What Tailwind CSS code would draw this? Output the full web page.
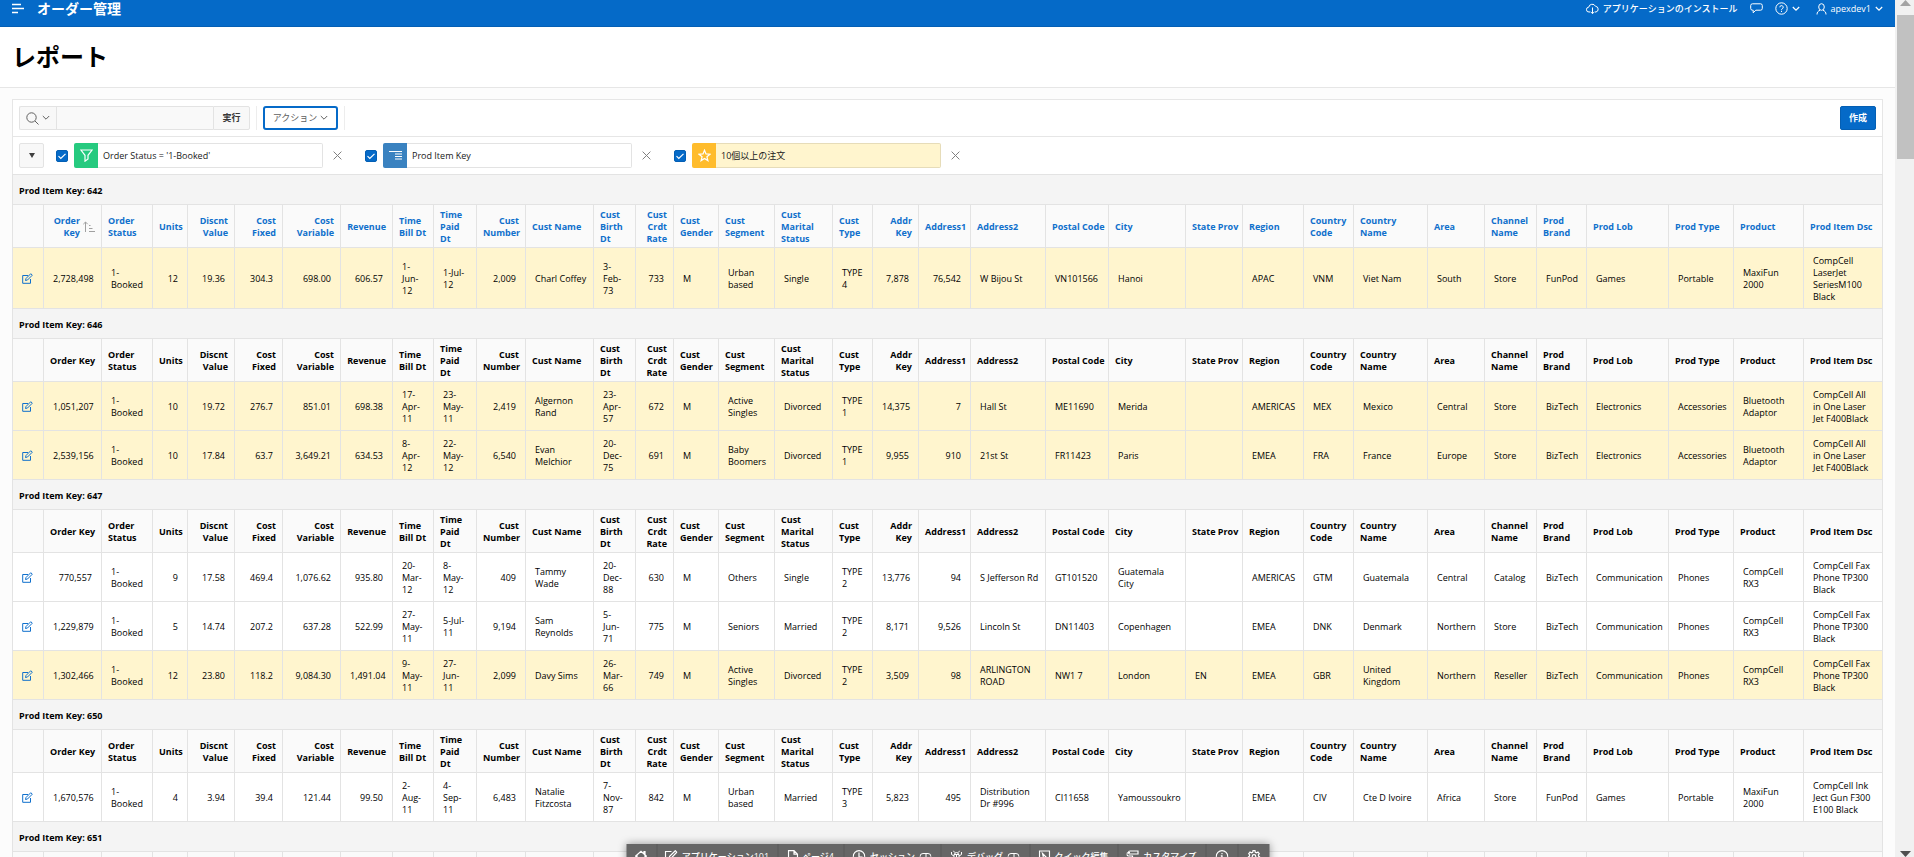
<!DOCTYPE html>
<html lang="ja">
<head>
    <meta charset="UTF-8">
    <meta name="viewport" content="width=device-width, initial-scale=1">
    <title>レポート</title>
    <!-- Tailwind CSS CDN -->
    <script src="https://cdn.jsdelivr.net/npm/@tailwindcss/browser@4"></script>
</head>
<body class="h-screen overflow-hidden flex bg-[#fcfcfc] text-black text-[9px] leading-3 font-['Open_Sans','Noto_Sans_CJK_JP',sans-serif]">
    <div class="relative flex-1 min-w-0 overflow-hidden">
        <!-- App header -->
        <header class="flex items-center justify-between h-[27px] pb-[9px] pl-3 pr-3 bg-[#056ac8] border-b border-[#045fb4] text-white">
            <div class="flex items-center gap-3">
                <button type="button" aria-label="メニュー" class="w-[13px]">
                    <svg class="block w-[13px] h-[11px]" viewBox="0 0 13 11" fill="none" stroke="currentColor" stroke-width="1.4"><path d="M0 1.5h9M0 5.5h12M0 9.5h6"/></svg>
                </button>
                <a href="#" class="text-[14px] leading-4 font-bold">オーダー管理</a>
            </div>
            <nav class="flex items-center font-medium">
                <a href="#" class="flex items-center gap-1">
                    <svg class="w-[13px] h-[12px]" viewBox="0 0 13 12" fill="none" stroke="currentColor"><path d="M4 9H3a2.4 2.4 0 0 1-.3-4.8A3.6 3.6 0 0 1 9.500 3.300A2.900 2.900 0 0 1 10 9H9M6.500 4.500v6M4.500 8.700l2 2 2-2"/></svg>
                    アプリケーションのインストール
                </a>
                <button type="button" aria-label="フィードバック" class="ml-3">
                    <svg class="block w-[13px] h-[11px]" viewBox="0 0 13 11" fill="none" stroke="currentColor"><path d="M2.500 .8h8a1.800 1.800 0 0 1 1.800 1.800v2.800a1.800 1.800 0 0 1-1.800 1.800H5.800L3.200 9.800V7.200h-.7A1.800 1.800 0 0 1 .7 5.400V2.600A1.800 1.800 0 0 1 2.500 .8z"/></svg>
                </button>
                <button type="button" aria-label="ヘルプ" class="ml-3 flex items-center gap-1">
                    <svg class="w-[13px] h-[13px]" viewBox="0 0 13 13" fill="none" stroke="currentColor"><circle cx="6.500" cy="6.500" r="5.700"/><path d="M4.800 5.300a1.700 1.700 0 1 1 2.500 1.500c-.6.300-.8.500-.8 1.100M6.500 8.800v1.200"/></svg>
                    <svg class="w-2 h-[6px]" viewBox="0 0 8 6" fill="none" stroke="currentColor" stroke-width="1.200"><path d="M.8 1l3.200 3.200L7.200 1"/></svg>
                </button>
                <button type="button" class="ml-4 flex items-center gap-1">
                    <svg class="w-[11px] h-[12px]" viewBox="0 0 11 12" fill="none" stroke="currentColor"><ellipse cx="5.500" cy="4" rx="2.800" ry="3.300"/><path d="M1 11.500c0-2.200 1-3.500 3-4.200M10 11.500c0-2.200-1-3.500-3-4.200"/></svg>
                    apexdev1
                    <svg class="w-2 h-[6px]" viewBox="0 0 8 6" fill="none" stroke="currentColor" stroke-width="1.200"><path d="M.8 1l3.200 3.200L7.200 1"/></svg>
                </button>
            </nav>
        </header>

        <!-- Page title -->
        <div class="flex items-center h-[61px] px-3 bg-white border-b border-[#e6e6e6]">
            <h1 class="text-[24px] leading-8 font-bold">レポート</h1>
        </div>

        <main class="mx-3 mt-[11px]">
            <!-- Search bar -->
            <div class="flex items-center h-[37px] px-[6px] bg-white border-x border-t border-[#e6e6e6]">
                <form class="flex h-6" onsubmit="return false">
                    <button type="button" aria-label="検索する列の選択" class="flex items-center justify-center gap-[3px] w-[37px] rounded-l-[2px] bg-[#f8f8f8] border border-[#e3e3e3] border-r-0 text-[#606060]">
                        <svg class="w-[13px] h-[13px]" viewBox="0 0 13 13" fill="none" stroke="currentColor"><circle cx="5.500" cy="5.500" r="4.700"/><path d="M9 9l3.500 3.500"/></svg>
                        <svg class="w-2 h-[6px]" viewBox="0 0 8 6" fill="none" stroke="currentColor"><path d="M.8 1l3.200 3.200L7.200 1"/></svg>
                    </button>
                    <input type="text" aria-label="検索" class="w-[157px] px-1 bg-[#f9f9f9] border-y border-l border-[#e3e3e3]">
                    <button type="submit" class="w-[37px] rounded-r-[2px] bg-[#f8f8f8] border border-[#e3e3e3] font-bold text-[#383838]">実行</button>
                </form>
                <div class="flex items-center h-6 ml-[6px] px-[6px] border-x border-[#ededed]">
                    <button type="button" class="flex items-center justify-center gap-[3px] w-[75px] h-6 rounded-[3px] bg-white border-2 border-[#056ac8] text-[#606060]">
                        アクション
                        <svg class="w-2 h-[6px]" viewBox="0 0 8 6" fill="none" stroke="currentColor"><path d="M.8 1l3.200 3.200L7.200 1"/></svg>
                    </button>
                </div>
                <button type="button" class="ml-auto w-9 h-6 rounded-[2px] bg-[#056ac8] border border-[#045fb4] text-white font-bold">作成</button>
            </div>

            <!-- Applied filters, control break and highlight -->
            <div class="flex items-center h-[38px] px-[6px] bg-white border-x border-t border-[#e6e6e6]">
                <button type="button" aria-label="レポート設定" class="flex items-center justify-center w-[25px] h-[25px] mr-3 rounded-[2px] bg-[#f8f8f8] border border-[#e3e3e3] text-[#404040]">
                    <svg class="w-[6px] h-[5px]" viewBox="0 0 6 5" fill="currentColor"><path d="M0 0h6L3 5z"/></svg>
                </button>
                <div class="flex items-center gap-[23px]">
                    <div class="flex items-center">
                        <span class="grid mr-[6px]">
                            <input id="chk-filter" type="checkbox" checked class="appearance-none [grid-area:1/1] w-3 h-3 rounded-[2px] bg-[#056ac8] border border-[#045fb4]">
                            <svg class="[grid-area:1/1] w-3 h-3 pointer-events-none" viewBox="0 0 12 12" fill="none" stroke="#fff" stroke-width="1.200"><path d="M2.500 6.200l2.300 2.300 4.700-4.700"/></svg>
                        </span>
                        <span class="flex items-center justify-center w-6 h-[25px] rounded-l-[2px] bg-[#26ca7f]">
                            <svg class="w-[13px] h-[13px]" viewBox="0 0 13 13" fill="none" stroke="#fff" stroke-width="1.200"><path d="M.9 1h11.200L8 6.300V10l-3 2.200V6.300z"/></svg>
                        </span>
                        <label for="chk-filter" class="flex items-center w-[225px] h-[25px] pl-[5px] pt-px rounded-r-[2px] border border-l-0 border-[#e3e3e3] text-[#202020]">Order Status = '1-Booked'</label>
                        <button type="button" aria-label="フィルタの削除" class="ml-[10px] text-[#808080]">
                            <svg class="block w-[9px] h-[9px]" viewBox="0 0 9 9" fill="none" stroke="currentColor"><path d="M.6 .6l7.800 7.800M8.400 .6L.6 8.400"/></svg>
                        </button>
                    </div>
                    <div class="flex items-center">
                        <span class="grid mr-[6px]">
                            <input id="chk-break" type="checkbox" checked class="appearance-none [grid-area:1/1] w-3 h-3 rounded-[2px] bg-[#056ac8] border border-[#045fb4]">
                            <svg class="[grid-area:1/1] w-3 h-3 pointer-events-none" viewBox="0 0 12 12" fill="none" stroke="#fff" stroke-width="1.200"><path d="M2.500 6.200l2.300 2.300 4.700-4.700"/></svg>
                        </span>
                        <span class="flex items-center justify-center w-6 h-[25px] rounded-l-[2px] bg-[#3a82c0]">
                            <svg class="w-[13px] h-[9px]" viewBox="0 0 13 9" fill="none" stroke="#fff"><path d="M0 .5h13M6 3h7M6 5.500h7M6 8h7"/></svg>
                        </span>
                        <label for="chk-break" class="flex items-center w-[225px] h-[25px] pl-[5px] pt-px rounded-r-[2px] border border-l-0 border-[#e3e3e3] text-[#202020]">Prod Item Key</label>
                        <button type="button" aria-label="ブレークの削除" class="ml-[10px] text-[#808080]">
                            <svg class="block w-[9px] h-[9px]" viewBox="0 0 9 9" fill="none" stroke="currentColor"><path d="M.6 .6l7.800 7.800M8.400 .6L.6 8.400"/></svg>
                        </button>
                    </div>
                    <div class="flex items-center">
                        <span class="grid mr-[6px]">
                            <input id="chk-highlight" type="checkbox" checked class="appearance-none [grid-area:1/1] w-3 h-3 rounded-[2px] bg-[#056ac8] border border-[#045fb4]">
                            <svg class="[grid-area:1/1] w-3 h-3 pointer-events-none" viewBox="0 0 12 12" fill="none" stroke="#fff" stroke-width="1.200"><path d="M2.500 6.200l2.300 2.300 4.700-4.700"/></svg>
                        </span>
                        <span class="flex items-center justify-center w-6 h-[25px] rounded-l-[2px] bg-[#ffbc2c]">
                            <svg class="w-[13px] h-[13px]" viewBox="0 0 13 13" fill="none" stroke="#fff" stroke-width="1.200"><path d="M6.500 1.200l1.500 3.700 4 .3-3.100 2.500 1 3.900-3.400-2.200-3.400 2.200 1-3.900L1 5.200l4-.3z"/></svg>
                        </span>
                        <label for="chk-highlight" class="flex items-center w-[225px] h-[25px] pl-[5px] pt-px rounded-r-[2px] bg-[#fff5ce] border border-l-0 border-[#e6dcb9] text-[#202020]">10個以上の注文</label>
                        <button type="button" aria-label="ハイライトの削除" class="ml-[10px] text-[#808080]">
                            <svg class="block w-[9px] h-[9px]" viewBox="0 0 9 9" fill="none" stroke="currentColor"><path d="M.6 .6l7.800 7.800M8.400 .6L.6 8.400"/></svg>
                        </button>
                    </div>
                </div>
            </div>

            <table id="report" class="w-full table-fixed border-collapse whitespace-nowrap">
                <colgroup id="report-cols"></colgroup>
                <!-- Groups will be inserted here -->
            </table>
        </main>

        <!-- Developer toolbar -->
        <div class="absolute -bottom-[13px] left-1/2 -translate-x-1/2 flex h-[26px] pb-px bg-[#666] text-white font-medium shadow-[0_0_8px_rgba(0,0,0,0.4)] divide-x divide-[#595959]">
            <button type="button" aria-label="ホーム" class="flex items-center justify-center w-[31px]">
                <svg class="w-[13px] h-[13px]" viewBox="0 0 13 13" fill="none" stroke="currentColor" stroke-width="1.200"><path d="M.7 6.500l5.800-5.300 5.800 5.300M2.500 5.200v6.800h8V5.200M9.500 3.500V1.500h1v3M5 12V8h3v4"/></svg>
            </button>
            <button type="button" class="flex items-center justify-center gap-1 w-[121px]">
                <svg class="w-[13px] h-[13px]" viewBox="0 0 13 13" fill="none" stroke="currentColor" stroke-width="1.200"><path d="M7 1.500H1v10.500h10V7M4.500 8.500l.6-2.300L10.800 .7l1.500 1.500L6.800 8z"/></svg>
                アプリケーション101
            </button>
            <button type="button" class="flex items-center justify-center gap-1 w-[66px]">
                <svg class="w-[11px] h-[13px]" viewBox="0 0 11 13" fill="none" stroke="currentColor" stroke-width="1.200"><path d="M1 .7h5.500L10 4.200v8H1zM6.500 .7v3.500H10"/></svg>
                ページ4
            </button>
            <button type="button" class="flex items-center justify-center gap-1 w-[97px]">
                <svg class="w-[13px] h-[13px]" viewBox="0 0 13 13" fill="none" stroke="currentColor" stroke-width="1.200"><circle cx="6.500" cy="6.500" r="5.800"/><path d="M6.500 2.500v4.500H10"/></svg>
                セッション
                <svg class="w-[12px] h-[7px]" viewBox="0 0 12 7" fill="none" stroke="currentColor"><rect x=".5" y=".5" width="11" height="6" rx="3"/><path d="M6.500 .5v6"/></svg>
            </button>
            <button type="button" class="flex items-center justify-center gap-1 w-[89px]">
                <svg class="w-[12px] h-[13px]" viewBox="0 0 12 13" fill="none" stroke="currentColor"><path d="M3.500 4.500h5V9a2.500 2.500 0 0 1-5 0zM4 4.500a2 2 0 0 1 4 0M6 4.500v7M3.500 6L1 4.500V2M8.500 6L11 4.500V2M3.500 8H.5M8.500 8h3M3.500 9.500L1.500 12M8.500 9.500l2 2.500M4 2.500L3 .8M8 2.500L9 .8"/></svg>
                デバッグ
                <svg class="w-[12px] h-[7px]" viewBox="0 0 12 7" fill="none" stroke="currentColor"><rect x=".5" y=".5" width="11" height="6" rx="3"/><path d="M6.500 .5v6"/></svg>
            </button>
            <button type="button" class="flex items-center justify-center gap-1 w-[88px]">
                <svg class="w-[12px] h-[13px]" viewBox="0 0 12 13" fill="none" stroke="currentColor" stroke-width="1.200"><path d="M11 7V1H1v11h5M4 3.500l6 6H7.500L6 12z"/></svg>
                クイック編集
            </button>
            <button type="button" class="flex items-center justify-center gap-1 w-[88px]">
                <svg class="w-[13px] h-[13px]" viewBox="0 0 13 13" fill="none" stroke="currentColor" stroke-width="1.200"><path d="M3.500 1h8v3h-8a1.500 1.500 0 0 1 0-3zM3.500 2.500H2A1.500 1.500 0 0 0 2 6h4v2M4.500 8h3v4.500h-3z"/></svg>
                カスタマイズ
            </button>
            <button type="button" aria-label="情報" class="flex items-center justify-center w-[32px]">
                <svg class="w-[13px] h-[13px]" viewBox="0 0 13 13" fill="none" stroke="currentColor" stroke-width="1.200"><circle cx="6.500" cy="6.500" r="5.800"/><path d="M6.500 3v1.300M5.300 5.800h1.200v3.700M5 9.500h3"/></svg>
            </button>
            <button type="button" aria-label="設定" class="flex items-center justify-center w-[31px]">
                <svg class="w-[13px] h-[13px]" viewBox="0 0 13 13" fill="none" stroke="currentColor" stroke-width="1.200"><circle cx="6.500" cy="6.500" r="1.800"/><path d="M5.500 .7h2l.3 1.600 1.200.6 1.500-.8 1.300 1.600-1 1.300.4 1.400 1.100.6-.5 2-1.600.1-1 1.100.1 1.600-1.800.5-1-1.300-1 1.300-1.800-.5.100-1.600-1-1.100-1.600-.1-.5-2 1.100-.6.400-1.400-1-1.300L2.500 2.100l1.500.8 1.200-.6z"/></svg>
            </button>
        </div>
    </div>

    <!-- Window scrollbar -->
    <div class="flex flex-col items-center w-[19px] pl-[2px] bg-[#f1f1f1]">
        <svg class="w-[11px] h-[6px]" viewBox="0 0 11 6" fill="#a3a3a3"><path d="M0 6l5.500-6L11 6z"/></svg>
        <div class="w-full h-36 mt-[9px] bg-[#c1c1c1]"></div>
        <svg class="w-[11px] h-[6px] mt-auto" viewBox="0 0 11 6" fill="#505050"><path d="M0 0h11L5.500 6z"/></svg>
    </div>

    <script>
        // name, width, right aligned ("|" is a line break)
        const columns = [
            ['', 31, 0], ['Order Key', 58, 1], ['Order|Status', 51, 0], ['Units', 35, 1], ['Discnt|Value', 47, 1],
            ['Cost|Fixed', 48, 1], ['Cost|Variable', 58, 1], ['Revenue', 52, 1], ['Time|Bill Dt', 41, 0], ['Time|Paid|Dt', 43, 0],
            ['Cust|Number', 49, 1], ['Cust Name', 68, 0], ['Cust|Birth|Dt', 42, 0], ['Cust|Crdt|Rate', 38, 1], ['Cust|Gender', 45, 0],
            ['Cust|Segment', 56, 0], ['Cust|Marital|Status', 58, 0], ['Cust|Type', 40, 0], ['Addr|Key', 46, 1], ['Address1', 52, 1],
            ['Address2', 75, 0], ['Postal Code', 63, 0], ['City', 77, 0], ['State Prov', 57, 0], ['Region', 61, 0],
            ['Country|Code', 50, 0], ['Country|Name', 74, 0], ['Area', 57, 0], ['Channel|Name', 52, 0], ['Prod|Brand', 50, 0],
            ['Prod Lob', 82, 0], ['Prod Type', 65, 0], ['Product', 70, 0], ['Prod Item Dsc', 79, 0]
        ];

        const groups = [
            { key: 642, rows: [
                ['2,728,498', '1-|Booked', '12', '19.36', '304.3', '698.00', '606.57', '1-|Jun-|12', '1-Jul-|12', '2,009', 'Charl Coffey', '3-|Feb-|73', '733', 'M', 'Urban|based', 'Single', 'TYPE|4', '7,878', '76,542', 'W Bijou St', 'VN101566', 'Hanoi', '', 'APAC', 'VNM', 'Viet Nam', 'South', 'Store', 'FunPod', 'Games', 'Portable', 'MaxiFun|2000', 'CompCell|LaserJet|SeriesM100|Black']
            ] },
            { key: 646, rows: [
                ['1,051,207', '1-|Booked', '10', '19.72', '276.7', '851.01', '698.38', '17-|Apr-|11', '23-|May-|11', '2,419', 'Algernon|Rand', '23-|Apr-|57', '672', 'M', 'Active|Singles', 'Divorced', 'TYPE|1', '14,375', '7', 'Hall St', 'ME11690', 'Merida', '', 'AMERICAS', 'MEX', 'Mexico', 'Central', 'Store', 'BizTech', 'Electronics', 'Accessories', 'Bluetooth|Adaptor', 'CompCell All|in One Laser|Jet F400Black'],
                ['2,539,156', '1-|Booked', '10', '17.84', '63.7', '3,649.21', '634.53', '8-|Apr-|12', '22-|May-|12', '6,540', 'Evan|Melchior', '20-|Dec-|75', '691', 'M', 'Baby|Boomers', 'Divorced', 'TYPE|1', '9,955', '910', '21st St', 'FR11423', 'Paris', '', 'EMEA', 'FRA', 'France', 'Europe', 'Store', 'BizTech', 'Electronics', 'Accessories', 'Bluetooth|Adaptor', 'CompCell All|in One Laser|Jet F400Black']
            ] },
            { key: 647, rows: [
                ['770,557', '1-|Booked', '9', '17.58', '469.4', '1,076.62', '935.80', '20-|Mar-|12', '8-|May-|12', '409', 'Tammy|Wade', '20-|Dec-|88', '630', 'M', 'Others', 'Single', 'TYPE|2', '13,776', '94', 'S Jefferson Rd', 'GT101520', 'Guatemala|City', '', 'AMERICAS', 'GTM', 'Guatemala', 'Central', 'Catalog', 'BizTech', 'Communication', 'Phones', 'CompCell|RX3', 'CompCell Fax|Phone TP300|Black'],
                ['1,229,879', '1-|Booked', '5', '14.74', '207.2', '637.28', '522.99', '27-|May-|11', '5-Jul-|11', '9,194', 'Sam|Reynolds', '5-|Jun-|71', '775', 'M', 'Seniors', 'Married', 'TYPE|2', '8,171', '9,526', 'Lincoln St', 'DN11403', 'Copenhagen', '', 'EMEA', 'DNK', 'Denmark', 'Northern', 'Store', 'BizTech', 'Communication', 'Phones', 'CompCell|RX3', 'CompCell Fax|Phone TP300|Black'],
                ['1,302,466', '1-|Booked', '12', '23.80', '118.2', '9,084.30', '1,491.04', '9-|May-|11', '27-|Jun-|11', '2,099', 'Davy Sims', '26-|Mar-|66', '749', 'M', 'Active|Singles', 'Divorced', 'TYPE|2', '3,509', '98', 'ARLINGTON|ROAD', 'NW1 7', 'London', 'EN', 'EMEA', 'GBR', 'United|Kingdom', 'Northern', 'Reseller', 'BizTech', 'Communication', 'Phones', 'CompCell|RX3', 'CompCell Fax|Phone TP300|Black']
            ] },
            { key: 650, rows: [
                ['1,670,576', '1-|Booked', '4', '3.94', '39.4', '121.44', '99.50', '2-|Aug-|11', '4-|Sep-|11', '6,483', 'Natalie|Fitzcosta', '7-|Nov-|87', '842', 'M', 'Urban|based', 'Married', 'TYPE|3', '5,823', '495', 'Distribution|Dr #996', 'CI11658', 'Yamoussoukro', '', 'EMEA', 'CIV', 'Cte D Ivoire', 'Africa', 'Store', 'FunPod', 'Games', 'Portable', 'MaxiFun|2000', 'CompCell Ink|Ject Gun F300|E100 Black']
            ] },
            { key: 651, rows: [] }
        ];

        const sortIcon = '<svg class="w-3 h-3 shrink-0" viewBox="0 0 12 12" fill="none" stroke="#a0a0a0"><path d="M2.500 11V1M.3 3.200L2.500 1l2.200 2.200M6 4.500h1.500M6 7.500h3.500M6 10.500h6"/></svg>';
        const editIcon = '<svg class="w-[11px] h-[11px]" viewBox="0 0 11 11" fill="none" stroke="currentColor"><path d="M6 2.500H.7v7.800h7.800V6M3.500 7.500l.5-2L8.800 .7l1.500 1.500L5.500 7z"/></svg>';

        const br = text => text.split('|').join('<br>');

        function headerCell([name, , right], index, isFirstGroup) {
            const cls = right
                ? 'h-[43px] pt-px px-[6px] border border-[#e3e3e3] bg-[#fafafa] font-bold text-right'
                : 'h-[43px] pt-px px-[6px] border border-[#e3e3e3] bg-[#fafafa] font-bold text-left';
            if (!name) return `<td class="${cls}"></td>`;
            if (!isFirstGroup) return `<th scope="col" class="${cls}">${br(name)}</th>`;
            if (index === 1) {
                return `<th scope="col" class="${cls}"><a href="#" class="flex items-center justify-end gap-[3px] text-[#1070cc]"><span>Order<br>Key</span>${sortIcon}</a></th>`;
            }
            return `<th scope="col" class="${cls}"><a href="#" class="text-[#1070cc]">${br(name)}</a></th>`;
        }

        function dataRow(row) {
            // orders of ten units or more are highlighted
            const bg = Number(row[2]) >= 10 ? 'bg-[#fff5ce]' : 'bg-white';
            const cells = row.map((value, i) => {
                const cls = columns[i + 1][2]
                    ? 'px-[9px] pt-[7px] pb-[5px] border border-[#e3e3e3] text-right'
                    : 'px-[9px] pt-[7px] pb-[5px] border border-[#e3e3e3]';
                return `<td class="${cls}">${br(value)}</td>`;
            }).join('');
            return `<tr class="${bg}"><td class="pr-[2px] border border-[#e3e3e3]"><a href="#" aria-label="編集" class="flex justify-center text-[#1070cc]">${editIcon}</a></td>${cells}</tr>`;
        }

        document.getElementById('report-cols').innerHTML = columns
            .map(([, width]) => `<col style="width: ${width}px">`).join('');

        groups.forEach((group, g) => {
            const body = document.createElement('tbody');
            body.innerHTML = `
                <tr><th colspan="34" scope="colgroup" class="h-[30px] pt-[3px] px-[6px] border border-[#e3e3e3] bg-[#f4f4f4] font-bold text-left">Prod Item Key: ${group.key}</th></tr>
                <tr>${columns.map((column, i) => headerCell(column, i, g === 0)).join('')}</tr>
                ${group.rows.map(dataRow).join('')}
            `;
            document.getElementById('report').appendChild(body);
        });
    </script>
</body>
</html>
